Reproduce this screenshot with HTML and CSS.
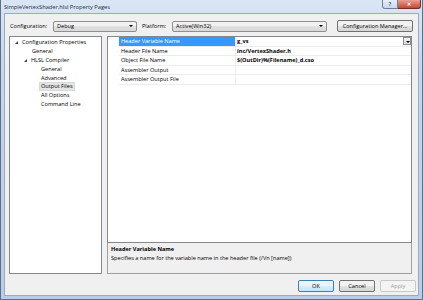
FILE: index.html
```html
<!DOCTYPE html>
<html lang="en">
<head>
    <meta charset="UTF-8">
    <title>SimpleVertexShader.hlsl Property Pages</title>
    <link rel="stylesheet" href="styles.css">
</head>
<body>
    <div class="window">
        <div class="titlebar">
            <span class="title">SimpleVertexShader.hlsl Property Pages</span>
            <div class="caption-buttons">
                <span class="cap help">?</span>
                <span class="cap close">&#x2715;</span>
            </div>
        </div>
        <div class="client">
            <div class="config-row">
                <span class="label">Configuration:</span>
                <div class="combo combo-config"><span>Debug</span><span class="arrow"></span></div>
                <span class="label label-platform">Platform:</span>
                <div class="combo combo-platform"><span>Active(Win32)</span><span class="arrow"></span></div>
                <button class="btn btn-manager">Configuration Manager...</button>
            </div>
            <div class="main">
                <div class="tree">
                    <div class="node lvl0"><span class="twisty"></span>Configuration Properties</div>
                    <div class="node lvl1">General</div>
                    <div class="node lvl1b"><span class="twisty"></span>HLSL Compiler</div>
                    <div class="node lvl2">General</div>
                    <div class="node lvl2">Advanced</div>
                    <div class="node lvl2"><span class="sel">Output Files</span></div>
                    <div class="node lvl2">All Options</div>
                    <div class="node lvl2">Command Line</div>
                </div>
                <div class="right">
                    <div class="grid">
                        <div class="row selected">
                            <span class="name">Header Variable Name</span>
                            <span class="value">g_vs<span class="drop"></span></span>
                        </div>
                        <div class="row">
                            <span class="name">Header File Name</span>
                            <span class="value">inc/VertexShader.h</span>
                        </div>
                        <div class="row">
                            <span class="name">Object File Name</span>
                            <span class="value">$(OutDir)%(Filename)_d.cso</span>
                        </div>
                        <div class="row">
                            <span class="name">Assembler Output</span>
                            <span class="value"></span>
                        </div>
                        <div class="row">
                            <span class="name">Assembler Output File</span>
                            <span class="value"></span>
                        </div>
                    </div>
                    <div class="description">
                        <div class="desc-title">Header Variable Name</div>
                        <div class="desc-text">Specifies a name for the variable name in the header file (/Vn [name])</div>
                    </div>
                </div>
            </div>
            <div class="button-row">
                <button class="btn btn-default">OK</button>
                <button class="btn">Cancel</button>
                <button class="btn" disabled>Apply</button>
            </div>
        </div>
    </div>
</body>
</html>
```

FILE: styles.css
```css
body {
    margin: 0;
    font-family: "Open Sans", "Noto Sans", sans-serif;
    font-size: 5.6px;
    color: #000;
}
.window {
    width: 423px;
    height: 300px;
    box-sizing: border-box;
    display: flex;
    flex-direction: column;
    background: linear-gradient(#dbe6f4, #c6d7ee 60px, #b9cde9);
    border: 1px solid #5f6f86;
    border-top: none;
}
.titlebar {
    height: 13px;
    display: flex;
    justify-content: space-between;
    align-items: flex-start;
    padding-left: 3px;
}
.title {
    font-size: 5.7px;
    line-height: 14px;
    color: #1e2a3a;
}
.caption-buttons {
    display: flex;
    margin-right: 1px;
}
.cap {
    height: 8px;
    display: flex;
    align-items: center;
    justify-content: center;
    border: 1px solid #6d7f98;
    border-top: none;
    font-size: 5px;
    color: #fff;
    font-weight: bold;
}
.help {
    width: 14px;
    background: linear-gradient(#e6eef8, #c9d8ec);
    color: #4a5a70;
    border-radius: 0 0 0 3px;
}
.close {
    width: 22px;
    border-left: none;
    background: linear-gradient(#e8a093, #c74632);
    border-color: #7a2d22;
    border-radius: 0 0 3px 0;
}
.client {
    flex: 1;
    margin: 0 3px 3px;
    background: #f0f0f0;
    border: 1px solid #99aac2;
    padding: 6px 4px 0 4px;
    display: flex;
    flex-direction: column;
}
.config-row {
    display: flex;
    align-items: center;
    height: 12px;
}
.label {
    margin-left: 1px;
    width: 43px;
}
.label-platform {
    margin-left: 5px;
    width: 30px;
}
.combo {
    height: 11px;
    box-sizing: border-box;
    border: 1px solid #8e8f8f;
    border-radius: 2px;
    background: linear-gradient(#f2f2f2 50%, #e0e0e0 50%, #d8d8d8);
    display: flex;
    align-items: center;
    justify-content: space-between;
    padding: 0 3px;
}
.combo-config {
    width: 84px;
}
.combo-platform {
    width: 155px;
}
.arrow {
    width: 0;
    height: 0;
    border-left: 2px solid transparent;
    border-right: 2px solid transparent;
    border-top: 2px solid #000;
}
.btn {
    font-family: inherit;
    font-size: 5.6px;
    height: 12px;
    box-sizing: border-box;
    border: 1px solid #707070;
    border-radius: 2px;
    background: linear-gradient(#f2f2f2 50%, #e2e2e2 50%, #d6d6d6);
    padding: 0;
    color: #000;
}
.btn-manager {
    margin-left: 10px;
    width: 76px;
}
.main {
    display: flex;
    margin-top: 4px;
    height: 238px;
    gap: 5px;
}
.tree {
    width: 93px;
    box-sizing: border-box;
    background: #fff;
    border: 1px solid #828790;
    padding-top: 1px;
}
.node {
    height: 8.9px;
    line-height: 8.9px;
    white-space: nowrap;
    display: flex;
    align-items: center;
}
.lvl0 {
    padding-left: 5px;
}
.lvl1 {
    padding-left: 22px;
}
.lvl1b {
    padding-left: 14px;
}
.lvl2 {
    padding-left: 31px;
}
.twisty {
    width: 0;
    height: 0;
    border-left: 3px solid transparent;
    border-bottom: 3px solid #404040;
    margin-right: 4px;
}
.sel {
    background: #e5e5e5;
    border: 1px solid #d9d9d9;
    padding: 0 1px;
    margin-left: -2px;
    line-height: 7px;
}
.right {
    flex: 1;
    display: flex;
    flex-direction: column;
    margin-right: 2px;
}
.grid {
    flex: 1;
    background: #fff;
    border: 1px solid #828790;
    padding-left: 11px;
}
.row {
    display: flex;
    height: 9.5px;
    line-height: 9px;
    border-bottom: 1px solid #ececec;
    box-sizing: border-box;
}
.name {
    width: 117px;
    padding-left: 2px;
    border-right: 1px solid #ececec;
    box-sizing: border-box;
    white-space: nowrap;
}
.value {
    flex: 1;
    padding-left: 1px;
    font-weight: bold;
    display: flex;
    justify-content: space-between;
}
.selected .name {
    background: #3399ff;
    color: #fff;
}
.drop {
    width: 8px;
    height: 8px;
    box-sizing: border-box;
    border: 1px solid #8b8b8b;
    background: linear-gradient(#f4f4f4, #dcdcdc);
    position: relative;
}
.drop::after {
    content: "";
    position: absolute;
    left: 2px;
    top: 3px;
    border-left: 2px solid transparent;
    border-right: 2px solid transparent;
    border-top: 2px solid #000;
}
.description {
    height: 31px;
    box-sizing: border-box;
    border: 1px solid #a0a0a0;
    border-top: none;
    padding: 2px 3px;
    line-height: 9px;
}
.desc-title {
    font-weight: bold;
}
.button-row {
    display: flex;
    justify-content: flex-end;
    gap: 5px;
    margin-top: 6px;
    margin-right: -2px;
}
.button-row .btn {
    width: 36px;
}
.btn-default {
    border-color: #3c7fb1;
    background: linear-gradient(#eaf6fd 50%, #d9f0fc 50%, #bee6fd);
}
.btn:disabled {
    color: #a0a0a0;
    border-color: #c8c8c8;
    background: #f4f4f4;
}
```
